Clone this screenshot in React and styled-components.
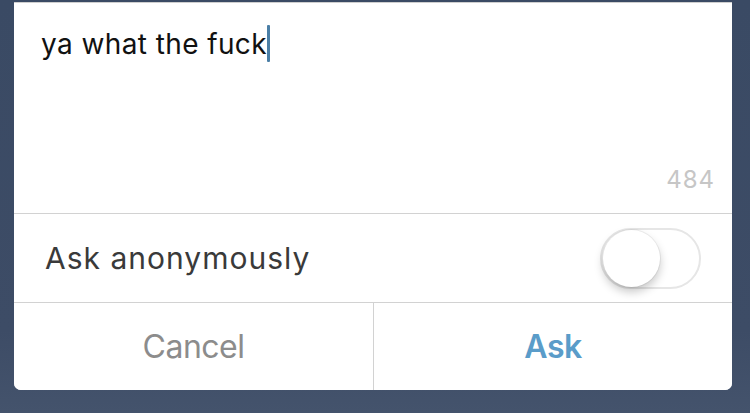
import React from 'react';
import styled, { createGlobalStyle } from 'styled-components';

const Global = createGlobalStyle`
  html, body {
    margin: 0;
    padding: 0;
    height: 100%;
    background: #3b4a63;
    font-family: Inter, "Liberation Sans", sans-serif;
  }
  #root { height: 100%; }
`;

const Page = styled.div`
  height: 413px;
  overflow: hidden;
  padding: 2px 18px 0 14px;
  box-sizing: border-box;
  background: linear-gradient(180deg, #3a4a64 0%, #3d4c66 80%, #44536c 100%);
`;

const Card = styled.div`
  background: #fff;
  border-top: 1px solid #cfcfcf;
  border-radius: 0 0 7px 7px;
  overflow: hidden;
`;

const Compose = styled.div`
  height: 211px;
  display: flex;
  flex-direction: column;
  justify-content: space-between;
  padding: 22px 17px 19px 27px;
  box-sizing: border-box;
  border-bottom: 1px solid #d2d2d2;
`;

const Typed = styled.div`
  font-size: 28px;
  color: #111;
  letter-spacing: 0.4px;
  display: flex;
  align-items: center;
`;

const Caret = styled.span`
  display: inline-block;
  width: 3px;
  height: 37px;
  border-radius: 1px;
  background: #4b7fa6;
`;

const Counter = styled.div`
  align-self: flex-end;
  font-size: 24px;
  letter-spacing: 1px;
  color: #c6c6c6;
`;

const OptionRow = styled.div`
  height: 88px;
  display: flex;
  align-items: center;
  justify-content: space-between;
  padding: 0 31px 0 31px;
  border-bottom: 1px solid #d2d2d2;
`;

const Label = styled.span`
  font-size: 30px;
  color: #3a3a3a;
  letter-spacing: 1px;
`;

const Track = styled.div`
  width: 101px;
  height: 61px;
  border-radius: 31px;
  border: 2px solid #e6e6e6;
  box-sizing: border-box;
  display: flex;
  align-items: center;
  padding-left: 1px;
`;

const Knob = styled.div`
  width: 57px;
  height: 57px;
  border-radius: 50%;
  background: #fff;
  box-shadow: 0 0 0 1px rgba(0,0,0,0.06), 0 5px 10px rgba(0,0,0,0.22);
`;

const Buttons = styled.div`
  height: 87px;
  display: grid;
  grid-template-columns: 359px 1fr;
`;

const Action = styled.button`
  border: none;
  background: #fff;
  font-family: inherit;
  font-size: 32px;
  font-weight: ${p => (p.primary ? 600 : 400)};
  color: ${p => (p.primary ? '#5a9cc9' : '#8c8c8c')};
  letter-spacing: -0.5px;
  padding: 0;
  & + & { border-left: 1px solid #d2d2d2; }
`;

export default function App() {
  return (
    <>
      <Global />
      <Page>
        <Card>
          <Compose>
            <Typed>ya what the fuck<Caret /></Typed>
            <Counter>484</Counter>
          </Compose>
          <OptionRow>
            <Label>Ask anonymously</Label>
            <Track><Knob /></Track>
          </OptionRow>
          <Buttons>
            <Action>Cancel</Action>
            <Action primary>Ask</Action>
          </Buttons>
        </Card>
      </Page>
    </>
  );
}
